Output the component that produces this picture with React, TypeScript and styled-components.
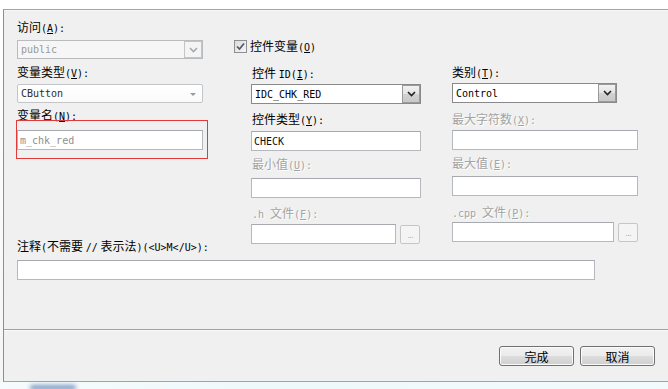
import React from "react";
import styled, { createGlobalStyle } from "styled-components";

const Global = createGlobalStyle`
  html, body { margin: 0; padding: 0; background: #f4fbfd; }
  body { width: 668px; height: 389px; overflow: hidden; font-family: "Noto Sans CJK SC", "Noto Sans", sans-serif; }
`;

const Page = styled.div`
  width: 668px;
  height: 389px;
  display: flex;
  flex-direction: column;
`;

const TopStrip = styled.div`
  height: 9px;
  background: #ffffff;
`;

const Body = styled.div`
  display: flex;
`;

const Gutter = styled.div`
  width: 3px;
  background: linear-gradient(#ffffff, #f4f6f6);
`;

const Dialog = styled.div`
  flex: 1;
  height: 371px;
  background: #f0f0f0;
  border-top: 1px solid #a3a3a3;
  border-left: 1px solid #8e8e8e;
  border-bottom: 1px solid #a3a3a3;
  display: flex;
  flex-direction: column;
  box-shadow: inset 0 1px 0 #f7f7f7;
`;

const Form = styled.div`
  padding-left: 13px;
  display: flex;
  flex-direction: column;
`;

const Columns = styled.div`
  height: 229px;
  display: flex;
  align-items: flex-start;
  flex-shrink: 0;
`;

const Col = styled.div<{ $w: number; $ml?: number }>`
  width: ${(p) => p.$w}px;
  margin-left: ${(p) => p.$ml ?? 0}px;
  display: flex;
  flex-direction: column;
  & > * { flex-shrink: 0; }
`;

const Label = styled.div<{ $mt?: number; $dim?: boolean; $indent?: number }>`
  margin-top: ${(p) => p.$mt ?? 0}px;
  margin-left: ${(p) => p.$indent ?? 0}px;
  height: 14px;
  line-height: 14px;
  font-size: 12px;
  color: ${(p) => (p.$dim ? "#a3a3a3" : "#000000")};
  white-space: nowrap;
  text-shadow: ${(p) => (p.$dim ? "1px 1px 0 #ffffff" : "none")};
`;

const Acc = styled.span`
  text-decoration: underline;
  text-underline-offset: 1px;
`;

const Mono = styled.span`
  font-family: "DejaVu Sans Mono", "Liberation Mono", monospace;
  font-size: 10px;
`;

const TextBox = styled.div<{ $mt?: number; $w: number; $h?: number; $indent?: number; $muted?: boolean }>`
  margin-top: ${(p) => p.$mt ?? 0}px;
  margin-left: ${(p) => p.$indent ?? 0}px;
  width: ${(p) => p.$w}px;
  height: ${(p) => p.$h ?? 20}px;
  flex-shrink: 0;
  box-sizing: border-box;
  background: #ffffff;
  border: 1px solid #b5b8bd;
  border-top-color: #a6a9ad;
  display: flex;
  align-items: center;
  padding-left: 2px;
  font-family: "DejaVu Sans Mono", "Liberation Mono", monospace;
  font-size: 10px;
  color: ${(p) => (p.$muted ? "#8f8f8f" : "#111111")};
`;

const ComboBox = styled.div<{ $mt?: number; $w: number; $h?: number; $indent?: number; $disabled?: boolean }>`
  margin-top: ${(p) => p.$mt ?? 0}px;
  margin-left: ${(p) => p.$indent ?? 0}px;
  width: ${(p) => p.$w}px;
  height: ${(p) => p.$h ?? 20}px;
  box-sizing: border-box;
  background: ${(p) => (p.$disabled ? "#f6f6f6" : "#ffffff")};
  border: 1px solid ${(p) => (p.$disabled ? "#b8bcbf" : "#8a8a8a")};
  display: flex;
  align-items: stretch;
  font-family: "DejaVu Sans Mono", "Liberation Mono", monospace;
  font-size: 10px;
  color: ${(p) => (p.$disabled ? "#9a9a9a" : "#000000")};
`;

const ComboText = styled.div`
  flex: 1;
  display: flex;
  align-items: center;
  padding-left: 3px;
`;

const DropBtn = styled.div<{ $disabled?: boolean }>`
  width: 18px;
  box-sizing: border-box;
  border: 1px solid ${(p) => (p.$disabled ? "#c4c4c4" : "#9a9a9a")};
  background: ${(p) =>
    p.$disabled ? "#f4f4f4" : "linear-gradient(#f2f2f2, #e3e3e3 50%, #d2d2d2 51%, #c8c8c8)"};
  display: flex;
  align-items: center;
  justify-content: center;
`;

const VistaCombo = styled.div<{ $mt?: number; $w: number }>`
  margin-top: ${(p) => p.$mt ?? 0}px;
  width: ${(p) => p.$w}px;
  height: 19px;
  box-sizing: border-box;
  border: 1px solid #c3c6c9;
  border-radius: 2px;
  background: linear-gradient(#ffffff, #fafafa);
  display: flex;
  align-items: center;
  padding: 0 6px 0 3px;
  font-family: "DejaVu Sans Mono", "Liberation Mono", monospace;
  font-size: 10px;
  color: #2c2c2c;
`;

const VistaText = styled.div`
  flex: 1;
`;

const SmallArrow = styled.div`
  width: 0;
  height: 0;
  border-left: 3px solid transparent;
  border-right: 3px solid transparent;
  border-top: 3px solid #9a9a9a;
  margin-top: 2px;
`;

const RedWrap = styled.div<{ $mt?: number }>`
  margin-top: ${(p) => p.$mt ?? 0}px;
  position: relative;
  display: flex;
  flex-direction: column;
`;

const RedBox = styled.div`
  position: absolute;
  left: -1px;
  top: 12px;
  width: 192px;
  height: 39px;
  box-sizing: border-box;
  border: 1px solid #e03a3a;
  pointer-events: none;
`;

const CheckRow = styled.div<{ $mt?: number }>`
  margin-top: ${(p) => p.$mt ?? 0}px;
  height: 13px;
  display: flex;
  align-items: center;
  gap: 3px;
  font-size: 12px;
  line-height: 13px;
  color: #000;
`;

const CheckBox = styled.div`
  width: 13px;
  height: 13px;
  box-sizing: border-box;
  border: 1px solid #8e8f8f;
  background: linear-gradient(135deg, #dcdcdc, #f5f5f5);
  display: flex;
  align-items: center;
  justify-content: center;
`;

const FileRow = styled.div<{ $mt?: number; $indent?: number }>`
  margin-top: ${(p) => p.$mt ?? 0}px;
  margin-left: ${(p) => p.$indent ?? 0}px;
  display: flex;
  align-items: flex-start;
  gap: 4px;
`;

const BrowseBtn = styled.div`
  width: 20px;
  height: 19px;
  margin-top: 1px;
  box-sizing: border-box;
  border: 1px solid #c6c6c6;
  border-radius: 2px;
  background: #f4f4f4;
  color: #b0b0b0;
  font-family: "DejaVu Sans", sans-serif;
  font-size: 9px;
  display: flex;
  align-items: center;
  justify-content: center;
  letter-spacing: -1px;
`;

const Separator = styled.div`
  margin-top: 49px;
  height: 1px;
  background: #a0a0a0;
  border-bottom: 1px solid #fbfbfb;
`;

const ButtonRow = styled.div`
  margin-top: 15px;
  display: flex;
  justify-content: flex-end;
  gap: 6px;
  padding-right: 13px;
`;

const Button = styled.div`
  width: 75px;
  height: 20px;
  box-sizing: border-box;
  border: 1px solid #707070;
  border-radius: 3px;
  background: linear-gradient(#f2f2f2 0%, #ebebeb 50%, #dddddd 51%, #cfcfcf 100%);
  box-shadow: inset 0 0 0 1px #fbfbfb;
  display: flex;
  align-items: center;
  justify-content: center;
  font-size: 12px;
  color: #000;
`;

const Desk = styled.div`
  height: 7px;
  display: flex;
  padding-left: 30px;
  background: linear-gradient(90deg, #f6fbfc, #eef9fb 40%, #f2fafc);
`;

const Blob = styled.div`
  width: 46px;
  height: 5px;
  margin-top: 3px;
  border-radius: 3px;
  background: #7f9cc8;
  filter: blur(2px);
`;

const Chevron = ({ color }: { color: string }) => (
  <svg width="9" height="6" viewBox="0 0 9 6">
    <path d="M1 1 L4.5 4.5 L8 1" fill="none" stroke={color} strokeWidth="1.6" />
  </svg>
);

const CheckMark = () => (
  <svg width="9" height="9" viewBox="0 0 9 9">
    <path d="M1 4.5 L3.5 7 L8 1.5" fill="none" stroke="#4a5a70" strokeWidth="1.7" />
  </svg>
);

export default function App() {
  return (
    <Page>
      <Global />
      <TopStrip />
      <Body>
        <Gutter />
        <Dialog>
          <Form>
            <Columns>
              <Col $w={190}>
                <Label $mt={10}>
                  访问<Mono>(<Acc>A</Acc>):</Mono>
                </Label>
                <ComboBox $mt={6} $w={186} $h={19} $disabled>
                  <ComboText>public</ComboText>
                  <DropBtn $disabled>
                    <Chevron color="#a8a8a8" />
                  </DropBtn>
                </ComboBox>
                <Label $mt={6}>
                  变量类型<Mono>(<Acc>V</Acc>):</Mono>
                </Label>
                <VistaCombo $mt={5} $w={186}>
                  <VistaText>CButton</VistaText>
                  <SmallArrow />
                </VistaCombo>
                <RedWrap $mt={5}>
                  <Label>
                    变量名<Mono>(<Acc>N</Acc>):</Mono>
                  </Label>
                  <TextBox $mt={8} $w={186} $muted>
                    m_chk_red
                  </TextBox>
                  <RedBox />
                </RedWrap>
              </Col>
              <Col $w={186} $ml={27}>
                <CheckRow $mt={30}>
                  <CheckBox>
                    <CheckMark />
                  </CheckBox>
                  <span>
                    控件变量<Mono>(<Acc>O</Acc>)</Mono>
                  </span>
                </CheckRow>
                <Label $mt={13} $indent={18}>
                  控件 <Mono>ID(<Acc>I</Acc>):</Mono>
                </Label>
                <ComboBox $mt={4} $w={170} $indent={17}>
                  <ComboText>IDC_CHK_RED</ComboText>
                  <DropBtn>
                    <Chevron color="#222222" />
                  </DropBtn>
                </ComboBox>
                <Label $mt={8} $indent={18}>
                  控件类型<Mono>(<Acc>Y</Acc>):</Mono>
                </Label>
                <TextBox $mt={5} $w={170} $indent={17}>
                  CHECK
                </TextBox>
                <Label $mt={6} $indent={18} $dim>
                  最小值<Mono>(<Acc>U</Acc>):</Mono>
                </Label>
                <TextBox $mt={7} $w={170} $indent={17} />
                <Label $mt={8} $indent={18} $dim>
                  <Mono>.h </Mono>文件<Mono>(<Acc>F</Acc>):</Mono>
                </Label>
                <FileRow $mt={4} $indent={17}>
                  <TextBox $w={145} />
                  <BrowseBtn>...</BrowseBtn>
                </FileRow>
              </Col>
              <Col $w={186} $ml={32}>
                <Label $mt={55}>
                  类别<Mono>(<Acc>T</Acc>):</Mono>
                </Label>
                <ComboBox $mt={4} $w={165}>
                  <ComboText>Control</ComboText>
                  <DropBtn>
                    <Chevron color="#222222" />
                  </DropBtn>
                </ComboBox>
                <Label $mt={9} $dim>
                  最大字符数<Mono>(<Acc>X</Acc>):</Mono>
                </Label>
                <TextBox $mt={4} $w={186} />
                <Label $mt={6} $dim>
                  最大值<Mono>(<Acc>E</Acc>):</Mono>
                </Label>
                <TextBox $mt={6} $w={186} />
                <Label $mt={9} $dim>
                  <Mono>.cpp </Mono>文件<Mono>(<Acc>P</Acc>):</Mono>
                </Label>
                <FileRow $mt={3}>
                  <TextBox $w={162} />
                  <BrowseBtn>...</BrowseBtn>
                </FileRow>
              </Col>
            </Columns>
            <Label>
              注释<Mono>(</Mono>不需要 <Mono>//</Mono> 表示法<Mono>)(&lt;U&gt;M&lt;/U&gt;):</Mono>
            </Label>
            <TextBox $mt={7} $w={578} />
          </Form>
          <Separator />
          <ButtonRow>
            <Button>完成</Button>
            <Button>取消</Button>
          </ButtonRow>
        </Dialog>
      </Body>
      <Desk>
        <Blob />
      </Desk>
    </Page>
  );
}
